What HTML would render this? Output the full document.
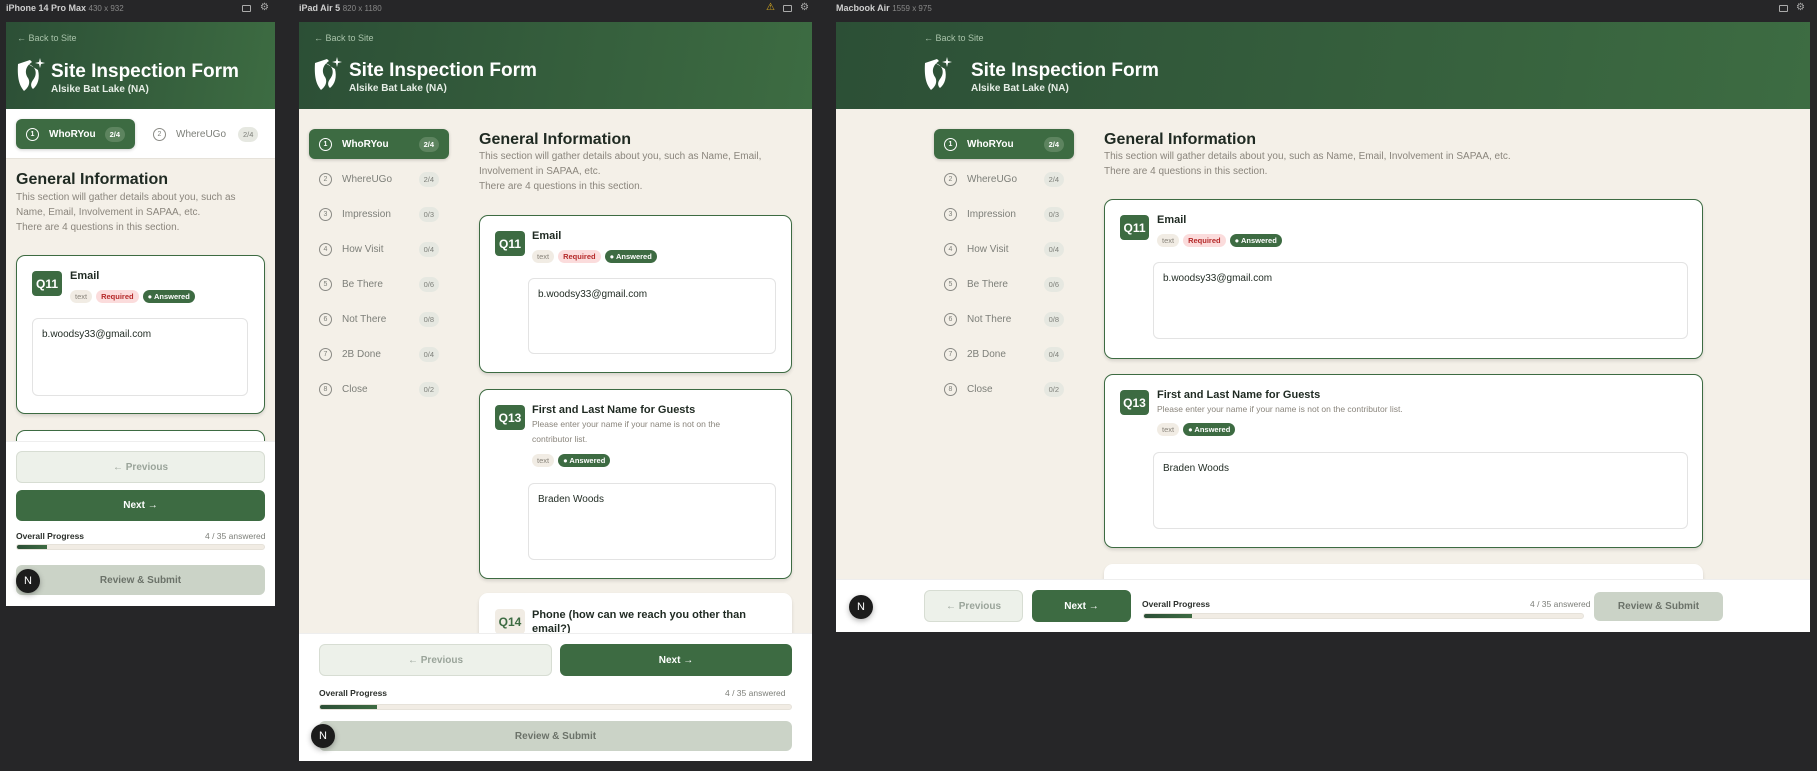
<!DOCTYPE html>
<html><head><meta charset="utf-8"><style>
*{margin:0;padding:0;box-sizing:border-box}
body{width:1817px;height:771px;background:#262628;font-family:"Liberation Sans",sans-serif;position:relative;overflow:hidden}
.a{position:absolute}
.lbl{color:#cfcfcf;font-size:9px;font-weight:bold}
.lbl span{color:#888;font-weight:normal;font-size:8px}
.frame{background:#f4f0e8;overflow:hidden}
.hdr{background:linear-gradient(100deg,#2c4f36,#3d6c42)}
.back{color:#a9c3aa;font-size:9px}
.title{color:#fff;font-weight:bold;font-size:19px}
.sub{color:#e6eee6;font-size:10px;font-weight:bold}
.h2{color:#1f2a22;font-weight:bold;font-size:16px}
.desc{color:#8a857c;font-size:10px;line-height:15px}
.card{background:#fff;border:1.5px solid #3d6b42;border-radius:9px;box-shadow:0 2px 3px rgba(0,0,0,.12)}
.qb{background:#3d6b42;color:#fff;font-weight:bold;font-size:12px;border-radius:4px;display:flex;align-items:center;justify-content:center}
.qt{color:#1f2a22;font-weight:bold;font-size:11px}
.tag{font-size:7.5px;border-radius:8px;padding:2px 5px;display:inline-block;margin-right:4px}
.t1{background:#f1ece4;color:#8a857c}.t2{background:#fbdcdc;color:#b52a2a;font-weight:bold}.t3{background:#3d6b42;color:#fff;font-weight:bold}
.inp{background:#fff;border:1px solid #e3e3e3;border-radius:6px;font-size:10px;color:#1f2a22;padding:10px 9px}
.nav{font-size:10px;color:#7d7f79;display:flex;align-items:center;height:30px;padding-left:10px;border-radius:6px}
.nav .c{width:13px;height:13px;border:1px solid #8a8a85;border-radius:50%;font-size:7px;display:flex;align-items:center;justify-content:center;margin-right:10px}
.nav .n{margin-left:auto;margin-right:10px;background:#e6e8e1;border-radius:8px;font-size:7.5px;padding:3px 5px}
.nav.on{background:#3d6b42;color:#fff;font-weight:bold;box-shadow:0 1px 3px rgba(0,0,0,.2)}
.nav.on .c{border-color:#fff}.nav.on .n{background:#5d845f;color:#fff}
.btn{border-radius:6px;display:flex;align-items:center;justify-content:center;font-size:10px;font-weight:bold}
.prev{background:#edf1ea;border:1px solid #d7ddd3;color:#9aa49a}
.next{background:#3d6b42;color:#fff}
.rev{background:#cbd3c7;color:#6b7269}
.pl{font-size:8.5px;font-weight:bold;color:#2b2f2b}.pr{font-size:8.5px;color:#7d7f79}
.bar{background:#f1ece4;border:1px solid #e6e2da;border-radius:4px;overflow:hidden}
.bar i{display:block;height:100%;background:linear-gradient(90deg,#2c4f36,#3d6b42)}
.nc{width:26px;height:26px;border-radius:50%;background:#1c1c1c;color:#fff;font-size:11px;display:flex;align-items:center;justify-content:center;box-shadow:0 2px 6px rgba(0,0,0,.3)}
</style></head><body>

<svg width="0" height="0" style="position:absolute"><defs><g id="logo"><path d="M2 6 L14 2 L16 4 C10 8 8 14 12 20 C15 25 12 30 8 33 C4 28 1 22 2 6Z" fill="#fff"/><path d="M12 6 C20 8 22 16 17 22 C14 26 15 29 17 31 C22 27 24 20 22 12 Z" fill="#fff"/><path d="M24 0 L25 4 L29 5 L25 6 L24 10 L23 6 L19 5 L23 4Z" fill="#fff"/></g></defs></svg>

<div class="a lbl" style="left:6px;top:3px">iPhone 14 Pro Max <span>430 x 932</span></div>
<div class="a lbl" style="left:299px;top:3px">iPad Air 5 <span>820 x 1180</span></div>
<div class="a lbl" style="left:836px;top:3px">Macbook Air <span>1559 x 975</span></div>
<div class="a" style="left:242px;top:5px;width:9px;height:7px;border:1px solid #aaa;border-radius:1px"></div>
<div class="a" style="left:260px;top:2px;color:#aaa;font-size:10px">⚙</div>
<div class="a" style="left:766px;top:2px;color:#e0b020;font-size:10px">⚠</div>
<div class="a" style="left:783px;top:5px;width:9px;height:7px;border:1px solid #aaa;border-radius:1px"></div>
<div class="a" style="left:800px;top:2px;color:#aaa;font-size:10px">⚙</div>
<div class="a" style="left:1779px;top:5px;width:9px;height:7px;border:1px solid #aaa;border-radius:1px"></div>
<div class="a" style="left:1796px;top:2px;color:#aaa;font-size:10px">⚙</div>

<!-- PHONE -->
<div class="a frame" style="left:6px;top:22px;width:269px;height:584px">
 <div class="a hdr" style="left:0;top:0;width:269px;height:87px"></div>
 <div class="a back" style="left:11px;top:11px">← Back to Site</div>
 <svg class="a" style="left:10px;top:36px" width="30" height="34" viewBox="0 0 30 34"><use href="#logo"/></svg>
 <div class="a title" style="left:45px;top:39px">Site Inspection Form</div>
 <div class="a sub" style="left:45px;top:62px">Alsike Bat Lake (NA)</div>
 <div class="a" style="left:0;top:87px;width:269px;height:50px;background:#fff;border-bottom:1px solid #e6e2da"></div>
 <div class="a nav on" style="left:10px;top:97px;width:119px">
  <div class="c">1</div>WhoRYou<div class="n">2/4</div></div>
 <div class="a nav" style="left:137px;top:97px;width:125px"><div class="c">2</div>WhereUGo<div class="n" style="margin-right:0;margin-left:12px">2/4</div></div>
 <div class="a h2" style="left:10px;top:149px">General Information</div>
 <div class="a desc" style="left:10px;top:168px;width:250px">This section will gather details about you, such as Name, Email, Involvement in SAPAA, etc.<br>There are 4 questions in this section.</div>
 <div class="a card" style="left:10px;top:233px;width:249px;height:159px">
  <div class="a qb" style="left:15px;top:15px;width:30px;height:25px">Q11</div>
  <div class="a qt" style="left:53px;top:14px">Email</div>
  <div class="a" style="left:53px;top:30px"><span class="tag t1">text</span><span class="tag t2">Required</span><span class="tag t3">● Answered</span></div>
  <div class="a inp" style="left:15px;top:62px;width:216px;height:78px">b.woodsy33@gmail.com</div>
 </div>
 <div class="a card" style="left:10px;top:408px;width:249px;height:40px"></div>
 <div class="a" style="left:0;top:419px;width:269px;height:165px;background:#fff;border-top:1px solid #eee"></div>
 <div class="a btn prev" style="left:10px;top:429px;width:249px;height:32px">← Previous</div>
 <div class="a btn next" style="left:10px;top:468px;width:249px;height:31px">Next →</div>
 <div class="a pl" style="left:10px;top:509px">Overall Progress</div>
 <div class="a pr" style="left:199px;top:509px">4 / 35 answered</div>
 <div class="a bar" style="left:10px;top:522px;width:249px;height:6px"><i style="width:12%"></i></div>
 <div class="a btn rev" style="left:10px;top:543px;width:249px;height:30px">Review &amp; Submit</div>
 <div class="a nc" style="left:10px;top:547px;width:24px;height:24px">N</div>
</div>

<!-- IPAD -->
<div class="a frame" style="left:299px;top:22px;width:513px;height:739px">
 <div class="a hdr" style="left:0;top:0;width:513px;height:87px"></div>
 <div class="a back" style="left:15px;top:11px">← Back to Site</div>
 <svg class="a" style="left:14px;top:35px" width="30" height="34" viewBox="0 0 30 34"><use href="#logo"/></svg>
 <div class="a title" style="left:50px;top:38px">Site Inspection Form</div>
 <div class="a sub" style="left:50px;top:61px">Alsike Bat Lake (NA)</div>
 <div class="a nav on" style="left:10px;top:107px;width:140px"><div class="c">1</div>WhoRYou<div class="n">2/4</div></div>
 <div class="a nav" style="left:10px;top:142px;width:140px"><div class="c">2</div>WhereUGo<div class="n">2/4</div></div>
 <div class="a nav" style="left:10px;top:177px;width:140px"><div class="c">3</div>Impression<div class="n">0/3</div></div>
 <div class="a nav" style="left:10px;top:212px;width:140px"><div class="c">4</div>How Visit<div class="n">0/4</div></div>
 <div class="a nav" style="left:10px;top:247px;width:140px"><div class="c">5</div>Be There<div class="n">0/6</div></div>
 <div class="a nav" style="left:10px;top:282px;width:140px"><div class="c">6</div>Not There<div class="n">0/8</div></div>
 <div class="a nav" style="left:10px;top:317px;width:140px"><div class="c">7</div>2B Done<div class="n">0/4</div></div>
 <div class="a nav" style="left:10px;top:352px;width:140px"><div class="c">8</div>Close<div class="n">0/2</div></div>
 <div class="a h2" style="left:180px;top:109px">General Information</div>
 <div class="a desc" style="left:180px;top:127px;width:310px">This section will gather details about you, such as Name, Email, Involvement in SAPAA, etc.<br>There are 4 questions in this section.</div>
 <div class="a card" style="left:180px;top:193px;width:313px;height:158px">
  <div class="a qb" style="left:15px;top:15px;width:30px;height:25px">Q11</div>
  <div class="a qt" style="left:52px;top:14px">Email</div>
  <div class="a" style="left:52px;top:30px"><span class="tag t1">text</span><span class="tag t2">Required</span><span class="tag t3">● Answered</span></div>
  <div class="a inp" style="left:48px;top:62px;width:248px;height:76px">b.woodsy33@gmail.com</div>
 </div>
 <div class="a card" style="left:180px;top:367px;width:313px;height:190px">
  <div class="a qb" style="left:15px;top:15px;width:30px;height:25px">Q13</div>
  <div class="a qt" style="left:52px;top:14px">First and Last Name for Guests</div>
  <div class="a desc" style="left:52px;top:27px;width:230px;font-size:8.5px">Please enter your name if your name is not on the contributor list.</div>
  <div class="a" style="left:52px;top:60px"><span class="tag t1">text</span><span class="tag t3">● Answered</span></div>
  <div class="a inp" style="left:48px;top:93px;width:248px;height:77px">Braden Woods</div>
 </div>
 <div class="a card" style="left:180px;top:571px;width:313px;height:80px;border-color:#fff">
  <div class="a qb" style="left:15px;top:15px;width:30px;height:25px;background:#f1ece4;color:#3d6b42">Q14</div>
  <div class="a qt" style="left:52px;top:14px;width:230px;line-height:14px">Phone (how can we reach you other than email?)</div>
 </div>
 <div class="a" style="left:0;top:611px;width:513px;height:128px;background:#fff;border-top:1px solid #eee"></div>
 <div class="a btn prev" style="left:20px;top:622px;width:233px;height:32px">← Previous</div>
 <div class="a btn next" style="left:261px;top:622px;width:232px;height:32px">Next →</div>
 <div class="a pl" style="left:20px;top:666px">Overall Progress</div>
 <div class="a pr" style="left:426px;top:666px">4 / 35 answered</div>
 <div class="a bar" style="left:20px;top:682px;width:473px;height:6px"><i style="width:12%"></i></div>
 <div class="a btn rev" style="left:20px;top:699px;width:473px;height:30px">Review &amp; Submit</div>
 <div class="a nc" style="left:12px;top:702px;width:24px;height:24px">N</div>
</div>

<!-- MAC -->
<div class="a frame" style="left:836px;top:22px;width:974px;height:610px">
 <div class="a hdr" style="left:0;top:0;width:974px;height:87px"></div>
 <div class="a back" style="left:88px;top:11px">← Back to Site</div>
 <svg class="a" style="left:87px;top:35px" width="30" height="34" viewBox="0 0 30 34"><use href="#logo"/></svg>
 <div class="a title" style="left:135px;top:38px">Site Inspection Form</div>
 <div class="a sub" style="left:135px;top:61px">Alsike Bat Lake (NA)</div>
 <div class="a nav on" style="left:98px;top:107px;width:140px"><div class="c">1</div>WhoRYou<div class="n">2/4</div></div>
 <div class="a nav" style="left:98px;top:142px;width:140px"><div class="c">2</div>WhereUGo<div class="n">2/4</div></div>
 <div class="a nav" style="left:98px;top:177px;width:140px"><div class="c">3</div>Impression<div class="n">0/3</div></div>
 <div class="a nav" style="left:98px;top:212px;width:140px"><div class="c">4</div>How Visit<div class="n">0/4</div></div>
 <div class="a nav" style="left:98px;top:247px;width:140px"><div class="c">5</div>Be There<div class="n">0/6</div></div>
 <div class="a nav" style="left:98px;top:282px;width:140px"><div class="c">6</div>Not There<div class="n">0/8</div></div>
 <div class="a nav" style="left:98px;top:317px;width:140px"><div class="c">7</div>2B Done<div class="n">0/4</div></div>
 <div class="a nav" style="left:98px;top:352px;width:140px"><div class="c">8</div>Close<div class="n">0/2</div></div>
 <div class="a h2" style="left:268px;top:109px">General Information</div>
 <div class="a desc" style="left:268px;top:127px;width:600px">This section will gather details about you, such as Name, Email, Involvement in SAPAA, etc.<br>There are 4 questions in this section.</div>
 <div class="a card" style="left:268px;top:177px;width:599px;height:160px">
  <div class="a qb" style="left:15px;top:15px;width:29px;height:25px">Q11</div>
  <div class="a qt" style="left:52px;top:14px">Email</div>
  <div class="a" style="left:52px;top:30px"><span class="tag t1">text</span><span class="tag t2">Required</span><span class="tag t3">● Answered</span></div>
  <div class="a inp" style="left:48px;top:62px;width:535px;height:77px">b.woodsy33@gmail.com</div>
 </div>
 <div class="a card" style="left:268px;top:352px;width:599px;height:174px">
  <div class="a qb" style="left:15px;top:15px;width:29px;height:25px">Q13</div>
  <div class="a qt" style="left:52px;top:14px">First and Last Name for Guests</div>
  <div class="a desc" style="left:52px;top:27px;font-size:8.5px">Please enter your name if your name is not on the contributor list.</div>
  <div class="a" style="left:52px;top:44px"><span class="tag t1">text</span><span class="tag t3">● Answered</span></div>
  <div class="a inp" style="left:48px;top:77px;width:535px;height:77px">Braden Woods</div>
 </div>
 <div class="a card" style="left:268px;top:542px;width:599px;height:60px;border-color:#fff"></div>
 <div class="a" style="left:0;top:557px;width:974px;height:53px;background:#fff;border-top:1px solid #eee"></div>
 <div class="a btn prev" style="left:88px;top:568px;width:99px;height:32px">← Previous</div>
 <div class="a btn next" style="left:196px;top:568px;width:99px;height:32px">Next →</div>
 <div class="a pl" style="left:306px;top:577px">Overall Progress</div>
 <div class="a pr" style="left:694px;top:577px">4 / 35 answered</div>
 <div class="a bar" style="left:307px;top:591px;width:441px;height:6px"><i style="width:11%"></i></div>
 <div class="a btn rev" style="left:758px;top:570px;width:129px;height:29px">Review &amp; Submit</div>
 <div class="a nc" style="left:13px;top:573px;width:24px;height:24px">N</div>
</div>
</body></html>
